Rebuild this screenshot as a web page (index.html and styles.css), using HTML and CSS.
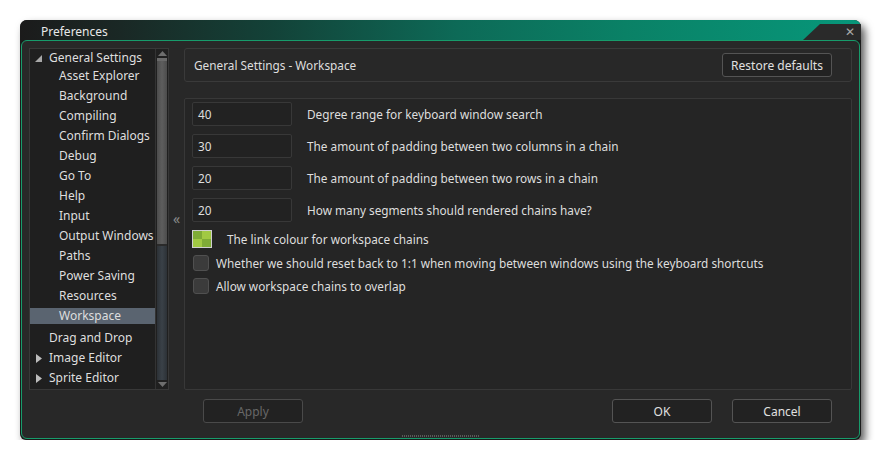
FILE: index.html
```html
<!DOCTYPE html>
<html>
<head>
<meta charset="utf-8">
<link rel="stylesheet" href="styles.css">
</head>
<body>
<div class="desktop">
  <div class="window">
    <div class="titlebar">
      <span class="title">Preferences</span>
      <div class="close-tab"><span class="close-x">✕</span></div>
    </div>
    <div class="client">
      <div class="main">
        <div class="tree">
          <div class="tree-list">
            <div class="item parent first"><svg class="tri" width="7" height="7" viewBox="0 0 7 7"><polygon points="7,0 7,7 0,7" fill="#a8a8a8"/></svg>General Settings</div>
            <div class="item child">Asset Explorer</div>
            <div class="item child">Background</div>
            <div class="item child">Compiling</div>
            <div class="item child">Confirm Dialogs</div>
            <div class="item child">Debug</div>
            <div class="item child">Go To</div>
            <div class="item child">Help</div>
            <div class="item child">Input</div>
            <div class="item child">Output Windows</div>
            <div class="item child">Paths</div>
            <div class="item child">Power Saving</div>
            <div class="item child">Resources</div>
            <div class="item child selected">Workspace</div>
            <div class="item parent after-group">Drag and Drop</div>
            <div class="item parent"><svg class="tri closed" width="6" height="9" viewBox="0 0 6 9"><polygon points="0,0 6,4.5 0,9" fill="#bdbdbd"/></svg>Image Editor</div>
            <div class="item parent"><svg class="tri closed" width="6" height="9" viewBox="0 0 6 9"><polygon points="0,0 6,4.5 0,9" fill="#bdbdbd"/></svg>Sprite Editor</div>
          </div>
          <div class="scrollbar">
            <div class="sb-btn"><svg width="9" height="5" viewBox="0 0 9 5"><polygon points="4.5,0 9,5 0,5" fill="#6e6e6e"/></svg></div>
            <div class="sb-thumb"></div>
            <div class="sb-track"></div>
            <div class="sb-btn"><svg width="9" height="5" viewBox="0 0 9 5"><polygon points="0,0 9,0 4.5,5" fill="#6e6e6e"/></svg></div>
          </div>
        </div>
        <div class="gutter">«</div>
        <div class="right">
          <div class="header">
            <span>General Settings - Workspace</span>
            <button class="btn restore">Restore defaults</button>
          </div>
          <div class="settings">
            <div class="row"><div class="input">40</div><span>Degree range for keyboard window search</span></div>
            <div class="row"><div class="input">30</div><span>The amount of padding between two columns in a chain</span></div>
            <div class="row"><div class="input">20</div><span>The amount of padding between two rows in a chain</span></div>
            <div class="row"><div class="input">20</div><span>How many segments should rendered chains have?</span></div>
            <div class="row colour-row"><div class="swatch"><i></i><i></i><i></i><i></i></div><span>The link colour for workspace chains</span></div>
            <div class="row check-row"><div class="check"></div><span>Whether we should reset back to 1:1 when moving between windows using the keyboard shortcuts</span></div>
            <div class="row check-row"><div class="check"></div><span>Allow workspace chains to overlap</span></div>
          </div>
        </div>
      </div>
      <div class="footer">
        <div class="footer-spacer"></div>
        <div class="footer-buttons">
          <button class="btn disabled">Apply</button>
          <div class="footer-fill"></div>
          <button class="btn">OK</button>
          <button class="btn">Cancel</button>
        </div>
      </div>
      <div class="grip-row"><div class="grip"></div></div>
    </div>
  </div>
</div>
</body>
</html>
```

FILE: styles.css
```css
html, body {
  margin: 0;
  padding: 0;
  background: #ffffff;
}
body {
  font-family: "Noto Sans", "Open Sans", "DejaVu Sans", sans-serif;
  font-size: 11.8px;
  color: #dedede;
}
.desktop {
  padding: 20px 0 0 20px;
}
.window {
  width: 841px;
  height: 420px;
  box-sizing: border-box;
  display: flex;
  flex-direction: column;
  background: #1a1a1a;
  border-radius: 7px 7px 6px 6px;
  box-shadow: 4px 5px 9px rgba(0, 0, 0, 0.65);
}
.titlebar {
  height: 20px;
  flex: none;
  display: flex;
  align-items: stretch;
  border-radius: 7px 7px 0 0;
  background: linear-gradient(to right, #1b1b1b 0%, #1a2825 12%, #134238 30%, #0d6a57 52%, #0a8166 72%, #07977a 100%);
}
.title {
  padding-left: 21px;
  line-height: 23px;
  color: #e8e8e8;
  font-size: 12px;
}
.close-tab {
  margin-left: auto;
  width: 52px;
  background: #2a2a2a;
  clip-path: polygon(0 100%, 17px 4px, 100% 4px, 100% 100%);
  border-top-right-radius: 6px;
  display: flex;
  align-items: center;
  justify-content: flex-end;
  padding-right: 6px;
}
.close-x {
  font-size: 12px;
  color: #a8a8a8;
  line-height: 12px;
  margin-top: 4px;
}
.client {
  flex: 1;
  margin: 0 1px 1px 1px;
  border: 1px solid #179b6b;
  border-radius: 6px;
  background: #282828;
  padding: 7px 7px 0 7px;
  display: flex;
  flex-direction: column;
  min-height: 0;
}
.main {
  height: 342px;
  flex: none;
  display: flex;
}
.tree {
  width: 140px;
  box-sizing: border-box;
  border: 1px solid #383838;
  background: #1f1f1f;
  display: flex;
}
.tree-list {
  flex: 1;
  display: flex;
  flex-direction: column;
  padding-top: 1px;
  font-size: 12px;
}
.item {
  height: 16px;
  line-height: 16px;
  margin-top: 4px;
  white-space: nowrap;
  position: relative;
}
.item.first {
  margin-top: 0;
}
.item.first + .item {
  margin-top: 2px;
}
.item.after-group {
  margin-top: 6px;
}
.parent {
  padding-left: 19px;
}
.child {
  padding-left: 29px;
}
.selected {
  background: #5a6470;
}
.tri {
  position: absolute;
  left: 5px;
  top: 5px;
}
.tri.closed {
  left: 6px;
  top: 4px;
}
.scrollbar {
  width: 12px;
  display: flex;
  flex-direction: column;
  background: #202020;
  border-left: 1px solid #333;
}
.sb-btn {
  height: 9px;
  display: flex;
  align-items: center;
  justify-content: center;
}
.sb-thumb {
  height: 183px;
  margin: 0 1px;
  background: linear-gradient(to right, #4c4c4c, #5e5e5e 50%, #4c4c4c);
  border-top: 3px solid #6a6a6a;
  border-bottom: 2px solid #2a2a2a;
}
.sb-track {
  flex: 1;
  margin: 0 1px;
  background: linear-gradient(to right, #2c3136, #3a4148 50%, #2c3136);
}
.gutter {
  width: 15px;
  display: flex;
  align-items: center;
  justify-content: center;
  color: #8a8a8a;
  font-size: 14px;
  padding-bottom: 2px;
  box-sizing: border-box;
}
.right {
  flex: 1;
  display: flex;
  flex-direction: column;
  gap: 16px;
}
.header {
  height: 34px;
  flex: none;
  box-sizing: border-box;
  border: 1px solid #3a3a3a;
  border-radius: 3px;
  display: flex;
  align-items: center;
  justify-content: space-between;
  padding: 0 19px 0 9px;
}
.btn {
  font-family: inherit;
  font-size: 12px;
  color: #e0e0e0;
  background: #222222;
  border: 1px solid #545454;
  border-radius: 3px;
  width: 100px;
  height: 24px;
  padding: 0;
  box-sizing: border-box;
}
.btn.restore {
  width: 110px;
}
.btn.disabled {
  color: #686868;
  border-color: #4a4a4a;
}
.settings {
  flex: 1;
  box-sizing: border-box;
  border: 1px solid #383838;
  border-radius: 2px;
  background: #252525;
  padding: 3px 7px;
  display: flex;
  flex-direction: column;
  gap: 8px;
}
.row {
  display: flex;
  align-items: center;
  gap: 15px;
  white-space: nowrap;
}
.input {
  width: 100px;
  height: 24px;
  box-sizing: border-box;
  border: 1px solid #383838;
  border-radius: 2px;
  background: #222222;
  padding-left: 5px;
  line-height: 22px;
}
.colour-row {
  gap: 15px;
}
.swatch {
  width: 20px;
  height: 18px;
  box-sizing: border-box;
  border: 1px solid #cfcfcf;
  display: grid;
  grid-template-columns: 1fr 1fr;
  grid-template-rows: 1fr 1fr;
}
.swatch i:nth-child(1), .swatch i:nth-child(4) {
  background: #7fab36;
}
.swatch i:nth-child(2), .swatch i:nth-child(3) {
  background: #a1c943;
}
.check-row {
  gap: 7px;
  margin-top: -1px;
}
.check {
  width: 16px;
  height: 16px;
  margin-left: 1px;
  box-sizing: border-box;
  border: 1px solid #505050;
  border-radius: 3px;
  background: #3b3b3b;
}
.footer {
  margin-top: 9px;
  height: 24px;
  flex: none;
  display: flex;
}
.footer-spacer {
  width: 154px;
}
.footer-buttons {
  flex: 1;
  display: flex;
  gap: 20px;
  padding: 0 20px;
}
.footer-fill {
  flex: 1;
}
.grip-row {
  display: flex;
  justify-content: center;
  margin-top: 12px;
}
.grip {
  width: 78px;
  height: 2px;
  background: repeating-linear-gradient(to right, #5a5a5a 0 1px, transparent 1px 2px);
}
```
